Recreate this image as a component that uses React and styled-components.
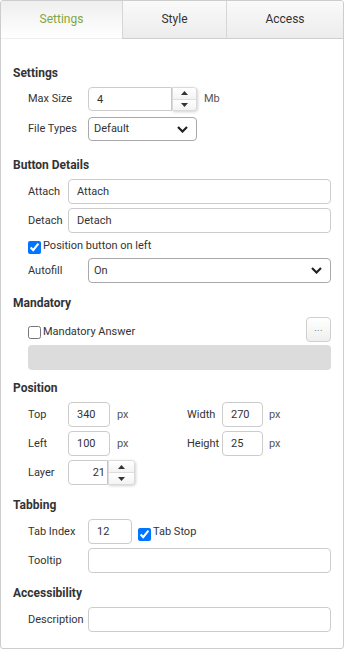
import React from "react";
import styled, { createGlobalStyle } from "styled-components";

const Global = createGlobalStyle`
  html, body { margin: 0; padding: 0; background: #fff; }
  body { font-family: Roboto, "Liberation Sans", Arial, sans-serif; font-size: 11px; color: #333; }
  * { box-sizing: border-box; }
`;

const Panel = styled.div`
  width: 344px;
  height: 649px;
  border: 1px solid #cdcdcd;
  border-radius: 3px;
  overflow: hidden;
  display: flex;
  flex-direction: column;
  background: #fff;
`;

const TabBar = styled.div`
  display: grid;
  grid-template-columns: 121px 104px 1fr;
  height: 38px;
  flex: none;
`;

const Tab = styled.div`
  display: flex;
  align-items: center;
  justify-content: center;
  font-size: 12px;
  padding-bottom: 1px;
  color: ${(p) => (p.$active ? "#84a53b" : "#333")};
  background: ${(p) =>
    p.$active ? "linear-gradient(#efefef, #fff)" : "linear-gradient(#fafafa, #ececec)"};
  border-bottom: 1px solid ${(p) => (p.$active ? "transparent" : "#cfcfcf")};
  border-left: ${(p) => (p.$first ? "none" : "1px solid #d6d6d6")};
`;

const Content = styled.div`
  padding: 26px 12px 16px 12px;
  display: flex;
  flex-direction: column;
`;

const Section = styled.section`
  margin-top: ${(p) => p.$mt}px;
`;

const Heading = styled.h3`
  margin: 0 0 6px 0;
  font-size: 12px;
  line-height: 16px;
  font-weight: 700;
  color: #333;
`;

const Rows = styled.div`
  display: flex;
  flex-direction: column;
  gap: ${(p) => p.$gap}px;
  padding-left: 15px;
`;

const FieldRow = styled.div`
  display: flex;
  align-items: ${(p) => p.$align || "center"};
  line-height: 16px;
`;

const Label = styled.span`
  width: ${(p) => p.$w}px;
  flex: none;
  white-space: nowrap;
  color: #333;
`;

const TextInput = styled.input`
  width: ${(p) => (p.$w ? `${p.$w}px` : "auto")};
  flex: ${(p) => (p.$w ? "none" : "1")};
  min-width: 0;
  height: ${(p) => p.$h || 25}px;
  border: 1px solid #cccccc;
  border-radius: ${(p) => (p.$joined ? "4px 0 0 4px" : "4px")};
  padding: ${(p) => (p.$align === "right" ? "0 2px 0 8px" : "0 8px")};
  font: inherit;
  color: #333;
  text-align: ${(p) => p.$align || "left"};
  background: #fff;
  outline: none;
`;

const Spin = styled.div`
  display: flex;
  height: ${(p) => p.$h}px;
  flex: none;
`;

const SpinButtons = styled.div`
  display: flex;
  flex-direction: column;
  width: ${(p) => p.$w}px;
  height: 100%;
  border: 1px solid #dadada;
  border-radius: 0 4px 4px 0;
  box-shadow: 1px 1px 3px rgba(0, 0, 0, 0.18);
  overflow: hidden;
  background: #fff;
`;

const SpinBtn = styled.div`
  flex: 1;
  display: flex;
  align-items: center;
  justify-content: center;
  background: linear-gradient(#ffffff, #f3f3f3);
  & + & {
    border-top: 1px solid #dddddd;
  }
`;

const Unit = styled.span`
  margin-left: ${(p) => p.$ml}px;
  color: #555;
`;

const SelectBox = styled.div`
  display: flex;
  align-items: center;
  justify-content: space-between;
  width: ${(p) => (p.$w ? `${p.$w}px` : "auto")};
  flex: ${(p) => (p.$w ? "none" : "1")};
  height: ${(p) => p.$h}px;
  border: 1px solid #a9a9a9;
  border-radius: 4px;
  padding: 0 8px 0 5px;
  color: #333;
  background: #fff;
`;

const Check = styled.input.attrs({ type: "checkbox" })`
  margin: 0;
  margin-top: ${(p) => p.$mt || 0}px;
  margin-left: ${(p) => p.$ml || 0}px;
  margin-bottom: ${(p) => p.$mb || 0}px;
  width: 13px;
  height: 13px;
  flex: none;
`;

const CheckText = styled.span`
  margin-left: 2px;
  margin-bottom: ${(p) => p.$mb || 0}px;
  white-space: nowrap;
  color: #333;
`;

const Spacer = styled.div`
  flex: 1;
`;

const DotsButton = styled.button`
  width: 25px;
  height: 25px;
  flex: none;
  padding: 0 0 2px 0;
  border: 1px solid #cfcfcf;
  border-radius: 4px;
  background: linear-gradient(#ffffff, #efefef);
  color: #444;
  font-family: inherit;
  font-size: 9px;
  line-height: 1;
  letter-spacing: 0.5px;
  display: flex;
  align-items: center;
  justify-content: center;
`;

const GrayBar = styled.div`
  height: 25px;
  margin-top: 3px;
  background: #dcdcdc;
  border-radius: 4px;
`;

const PosGrid = styled.div`
  display: grid;
  grid-template-columns: 159px 1fr;
  row-gap: 4px;
  padding-left: 15px;
`;

const Arrow = ({ up }) => (
  <svg width="7" height="4" viewBox="0 0 7 4">
    <polygon points={up ? "0,4 7,4 3.5,0" : "0,0 7,0 3.5,4"} fill="#333" />
  </svg>
);

const Chevron = () => (
  <svg width="11" height="7" viewBox="0 0 11 7">
    <polyline points="1,1 5.5,5.5 10,1" fill="none" stroke="#222" strokeWidth="2.2" />
  </svg>
);

const Spinner = ({ value, inputW, btnW, h, align }) => (
  <Spin $h={h}>
    <TextInput $w={inputW} $h={h} $joined $align={align} defaultValue={value} />
    <SpinButtons $w={btnW}>
      <SpinBtn>
        <Arrow up />
      </SpinBtn>
      <SpinBtn>
        <Arrow />
      </SpinBtn>
    </SpinButtons>
  </Spin>
);

export default function App() {
  return (
    <>
      <Global />
      <Panel>
        <TabBar>
          <Tab $active $first>Settings</Tab>
          <Tab>Style</Tab>
          <Tab>Access</Tab>
        </TabBar>
        <Content>
          <Section $mt={0}>
            <Heading>Settings</Heading>
            <Rows $gap={6}>
              <FieldRow>
                <Label $w={60}>Max Size</Label>
                <Spinner value="4" inputW={84} btnW={25} h={24} />
                <Unit $ml={7}>Mb</Unit>
              </FieldRow>
              <FieldRow>
                <Label $w={60}>File Types</Label>
                <SelectBox $w={109} $h={24}>
                  <span>Default</span>
                  <Chevron />
                </SelectBox>
              </FieldRow>
            </Rows>
          </Section>

          <Section $mt={16}>
            <Heading>Button Details</Heading>
            <Rows $gap={4}>
              <FieldRow>
                <Label $w={40}>Attach</Label>
                <TextInput defaultValue="Attach" />
              </FieldRow>
              <FieldRow>
                <Label $w={40}>Detach</Label>
                <TextInput defaultValue="Detach" />
              </FieldRow>
              <FieldRow $align="flex-end">
                <Check defaultChecked $mt={4} />
                <CheckText>Position button on left</CheckText>
              </FieldRow>
              <FieldRow>
                <Label $w={60}>Autofill</Label>
                <SelectBox $h={25}>
                  <span>On</span>
                  <Chevron />
                </SelectBox>
              </FieldRow>
            </Rows>
          </Section>

          <Section $mt={12}>
            <Heading>Mandatory</Heading>
            <Rows $gap={0}>
              <FieldRow $align="flex-end">
                <Check $mb={3} />
                <CheckText $mb={2}>Mandatory Answer</CheckText>
                <Spacer />
                <DotsButton type="button">...</DotsButton>
              </FieldRow>
              <GrayBar />
            </Rows>
          </Section>

          <Section $mt={10}>
            <Heading>Position</Heading>
            <PosGrid>
              <FieldRow>
                <Label $w={40}>Top</Label>
                <TextInput $w={42} defaultValue="340" />
                <Unit $ml={7}>px</Unit>
              </FieldRow>
              <FieldRow>
                <Label $w={35}>Width</Label>
                <TextInput $w={41} defaultValue="270" />
                <Unit $ml={6}>px</Unit>
              </FieldRow>
              <FieldRow>
                <Label $w={40}>Left</Label>
                <TextInput $w={42} defaultValue="100" />
                <Unit $ml={7}>px</Unit>
              </FieldRow>
              <FieldRow>
                <Label $w={35}>Height</Label>
                <TextInput $w={41} defaultValue="25" />
                <Unit $ml={6}>px</Unit>
              </FieldRow>
              <FieldRow>
                <Label $w={40}>Layer</Label>
                <Spinner value="21" inputW={40} btnW={27} h={25} align="right" />
              </FieldRow>
            </PosGrid>
          </Section>

          <Section $mt={12}>
            <Heading>Tabbing</Heading>
            <Rows $gap={4}>
              <FieldRow>
                <Label $w={60}>Tab Index</Label>
                <TextInput $w={44} defaultValue="12" />
                <Check defaultChecked $ml={6} $mt={6} />
                <CheckText>Tab Stop</CheckText>
              </FieldRow>
              <FieldRow>
                <Label $w={60}>Tooltip</Label>
                <TextInput defaultValue="" />
              </FieldRow>
            </Rows>
          </Section>

          <Section $mt={12}>
            <Heading>Accessibility</Heading>
            <Rows $gap={0}>
              <FieldRow>
                <Label $w={60}>Description</Label>
                <TextInput defaultValue="" />
              </FieldRow>
            </Rows>
          </Section>
        </Content>
      </Panel>
    </>
  );
}
